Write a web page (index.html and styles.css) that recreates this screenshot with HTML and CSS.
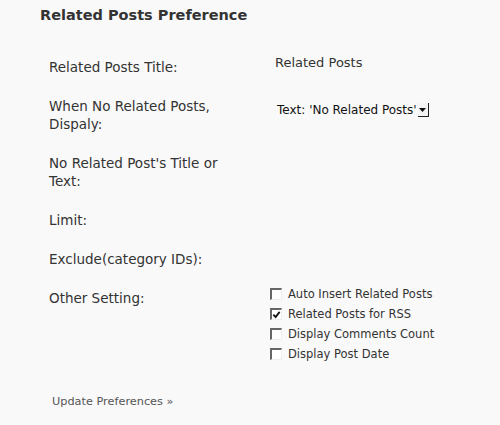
FILE: index.html
```html
<!DOCTYPE html>
<html>
<head>
<meta charset="utf-8">
<link rel="stylesheet" href="styles.css">
</head>
<body>
<div class="page">
  <h2 class="title">Related Posts Preference</h2>
  <div class="form">
    <div class="label">Related Posts Title:</div>
    <div class="value"><span class="text-value">Related Posts</span></div>

    <div class="label">When No Related Posts, Dispaly:</div>
    <div class="value"><span class="select"><span class="select-text">Text: 'No Related Posts'</span><span class="select-btn"><svg width="7" height="4" viewBox="0 0 7 4"><path d="M0 0h7L3.5 4z" fill="#111"/></svg></span></span></div>

    <div class="label">No Related Post's Title or Text:</div>
    <div class="value"></div>

    <div class="label">Limit:</div>
    <div class="value"></div>

    <div class="label">Exclude(category IDs):</div>
    <div class="value"></div>

    <div class="label">Other Setting:</div>
    <div class="value checks">
      <div class="check"><span class="box"></span>Auto Insert Related Posts</div>
      <div class="check"><span class="box"><svg width="10" height="10" viewBox="0 0 10 10"><path d="M1.5 4.5l2.5 2.8L8.5 1.5" fill="none" stroke="#111" stroke-width="2"/></svg></span>Related Posts for RSS</div>
      <div class="check"><span class="box"></span>Display Comments Count</div>
      <div class="check"><span class="box"></span>Display Post Date</div>
    </div>
  </div>
  <div class="footer">Update Preferences »</div>
</div>
</body>
</html>
```
FILE: styles.css
```css
html, body {
  margin: 0;
  padding: 0;
  background: #f9f9f9;
}
body {
  font-family: "DejaVu Sans", Verdana, sans-serif;
  color: #333;
  width: 500px;
  height: 425px;
  overflow: hidden;
}
.page {
  padding: 6px 0 0 40px;
}
.title {
  margin: 0;
  font-size: 14.5px;
  font-weight: bold;
  line-height: 18px;
  color: #333;
}
.form {
  display: grid;
  grid-template-columns: 221px 230px;
  row-gap: 21px;
  margin: 34px 0 0 9px;
  font-size: 13.5px;
  line-height: 18px;
}
.label {
  width: 180px;
}
.text-value {
  display: inline-block;
  padding-left: 5px;
  font-size: 13px;
  vertical-align: top;
  position: relative;
  top: -4px;
}
.select {
  display: inline-flex;
  align-items: center;
  margin-left: 7px;
  margin-top: 4px;
  font-size: 12px;
  color: #111;
}
.select-btn {
  display: inline-flex;
  align-items: center;
  justify-content: center;
  width: 10px;
  height: 13px;
  margin-left: 1px;
  border-right: 1px solid #222;
  border-bottom: 1px solid #222;
  background: #f4f4f4;
}
.checks {
  display: flex;
  flex-direction: column;
  margin-top: -5px;
}
.check {
  display: flex;
  align-items: center;
  height: 20px;
  font-size: 11.5px;
}
.box {
  display: inline-flex;
  align-items: center;
  justify-content: center;
  box-sizing: border-box;
  width: 12px;
  height: 12px;
  margin-right: 6px;
  border-top: 2px solid #666;
  border-left: 2px solid #666;
  border-right: 1px solid #eee;
  border-bottom: 1px solid #eee;
  background: #fff;
}
.footer {
  margin: 31px 0 0 12px;
  font-size: 11.3px;
  color: #555;
}
```
